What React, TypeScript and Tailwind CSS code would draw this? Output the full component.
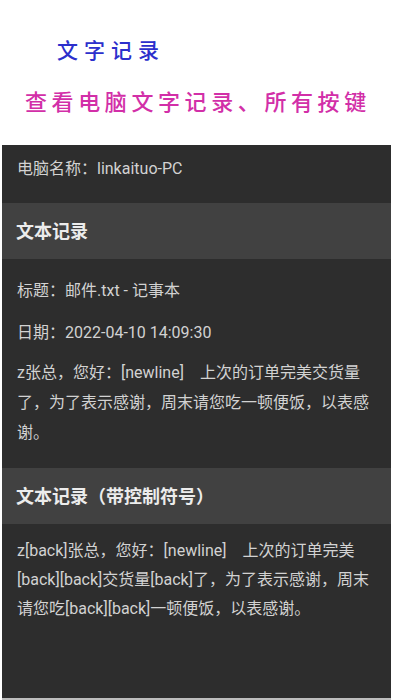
import React from 'react';

const CJK = "font-['Roboto','Noto_Sans_CJK_SC',sans-serif]";

function SectionHeader({ title }: { title: string }) {
  return (
    <div className="flex h-[56px] items-center bg-[#414141] pl-[14px] pt-[2px]">
      <span className="text-[18px] font-bold leading-[24px] text-[#ececec]">{title}</span>
    </div>
  );
}

export default function App() {
  return (
    <div className={`flex h-[700px] w-[394px] flex-col overflow-hidden bg-white ${CJK}`}>
      {/* banner */}
      <div className="flex h-[145px] flex-col">
        <div className="pl-[57px] pt-[36px] text-[21px] font-medium leading-[26px] tracking-[6px] text-[#2c2fcc] font-['Noto_Sans_CJK_SC',sans-serif]">
          文字记录
        </div>
        <div className="pl-[25px] pt-[24px] text-[22px] font-medium leading-[28px] tracking-[4.6px] text-[#d22fa8] font-['Noto_Sans_CJK_SC',sans-serif]">
          查看电脑文字记录、所有按键
        </div>
      </div>

      {/* record panel */}
      <div className="ml-[2px] flex h-[553px] w-[389px] flex-col bg-[#2d2d2d] text-[#d2d2d2]">
        <div className="h-[58px] pl-[15px] pt-[12px] text-[16px] leading-[24px]">电脑名称：linkaituo-PC</div>

        <SectionHeader title="文本记录" />

        <div className="flex flex-col pl-[15px] pr-[12px]">
          <div className="mt-[20px] text-[16px] leading-[24px]">标题：邮件.txt - 记事本</div>
          <div className="mt-[18px] text-[16px] leading-[24px]">日期：2022-04-10 14:09:30</div>
          <p className="mt-[13px] text-[16px] leading-[30px]">
            z张总，您好：[newline]{'\u3000'}上次的订单完美交货量了，为了表示感谢，周末请您吃一顿便饭，以表感谢。
          </p>
        </div>

        <div className="mt-[20px]">
          <SectionHeader title="文本记录（带控制符号）" />
        </div>

        <p className="mt-[12px] pl-[15px] pr-[12px] text-[16px] leading-[29px]">
          z[back]张总，您好：[newline]{'\u3000'}上次的订单完美[back][back]交货量[back]了，为了表示感谢，周末请您吃[back][back]一顿便饭，以表感谢。
        </p>
      </div>
      <div className="ml-[2px] h-[2px] w-[389px] bg-[#bdbdbd]" />
    </div>
  );
}
